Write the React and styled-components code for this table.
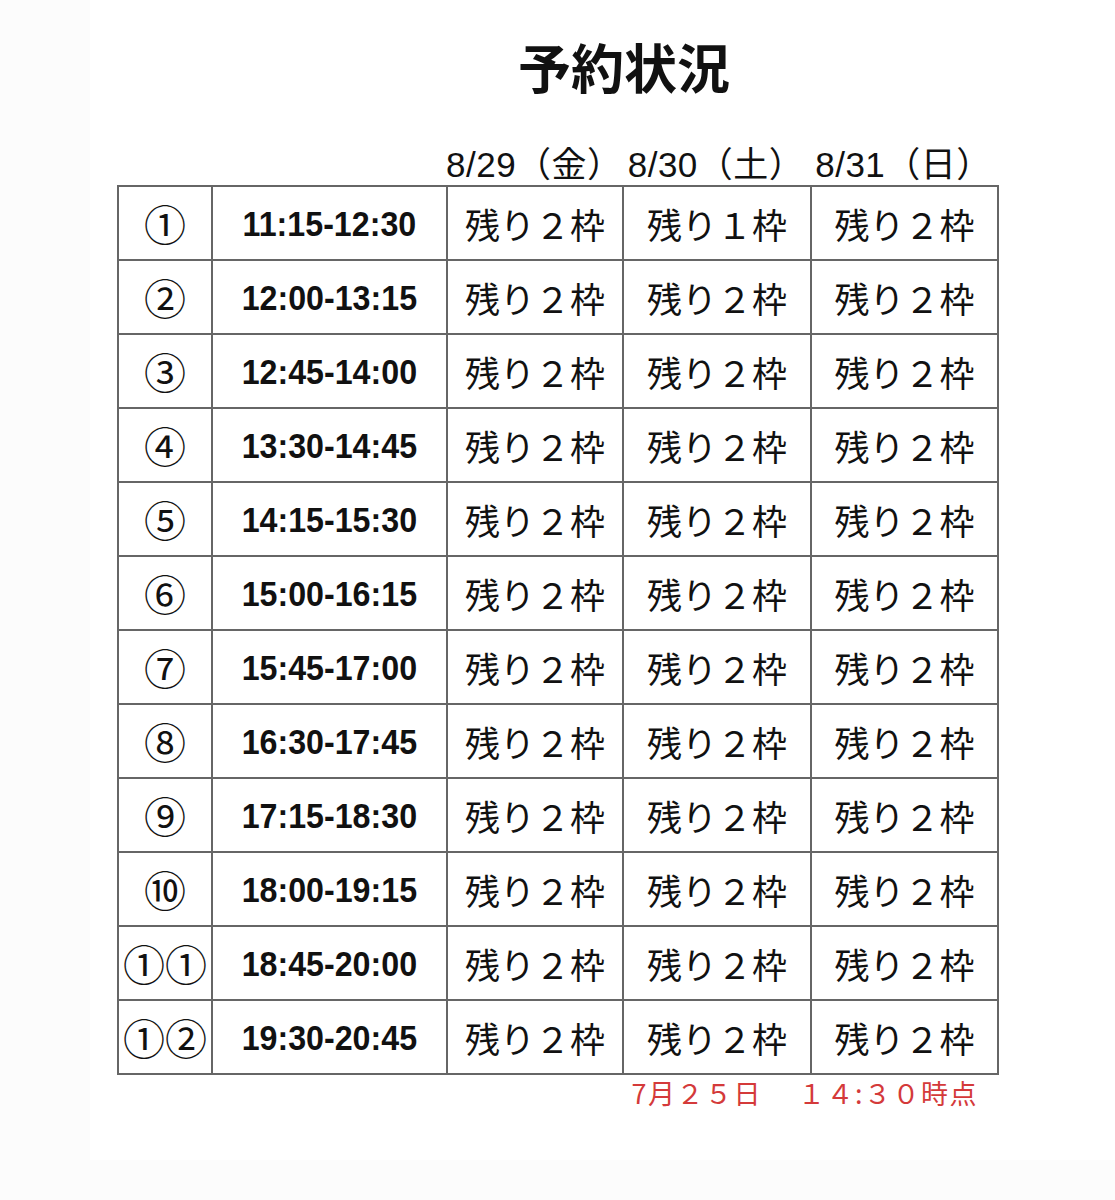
import styled, { createGlobalStyle } from "styled-components";

const GlobalStyle = createGlobalStyle`
  body {
    margin: 0;
    background: #fcfcfc;
  }
`;

const CJK = `"Noto Sans CJK JP", sans-serif`;
const LATIN_CJK = `"Liberation Sans", "Noto Sans CJK JP", sans-serif`;

const COLS = [94, 235, 176, 188, 187];

const dates = ["8/29（金）", "8/30（土）", "8/31（日）"];

const slots = [
  ["①", "11:15-12:30", [2, 1, 2]],
  ["②", "12:00-13:15", [2, 2, 2]],
  ["③", "12:45-14:00", [2, 2, 2]],
  ["④", "13:30-14:45", [2, 2, 2]],
  ["⑤", "14:15-15:30", [2, 2, 2]],
  ["⑥", "15:00-16:15", [2, 2, 2]],
  ["⑦", "15:45-17:00", [2, 2, 2]],
  ["⑧", "16:30-17:45", [2, 2, 2]],
  ["⑨", "17:15-18:30", [2, 2, 2]],
  ["⑩", "18:00-19:15", [2, 2, 2]],
  ["①①", "18:45-20:00", [2, 2, 2]],
  ["①②", "19:30-20:45", [2, 2, 2]],
];

const fullWidth = (n) => String.fromCharCode(0xff10 + n);

function App() {
  return (
    <>
      <GlobalStyle />
      <Sheet>
        <Title>予約状況</Title>
        <HeaderRow>
          {dates.map((d, i) => (
            <DateLabel key={d} col={i + 3}>
              {d}
            </DateLabel>
          ))}
        </HeaderRow>
        <Table>
          <colgroup>
            {COLS.map((w, i) => (
              <col key={i} style={{ width: w }} />
            ))}
          </colgroup>
          <tbody>
            {slots.map(([no, time, left]) => (
              <Row key={time}>
                <NoCell>{no}</NoCell>
                <TimeCell>
                  <TimeText>{time}</TimeText>
                </TimeCell>
                {left.map((n, i) => (
                  <SlotCell key={i}>残り{fullWidth(n)}枠</SlotCell>
                ))}
              </Row>
            ))}
          </tbody>
        </Table>
        <Note>7月２５日　 １４:３０時点</Note>
      </Sheet>
    </>
  );
}

const Sheet = styled.div`
  margin-left: 90px;
  min-height: 1160px;
  background: #fff;
  padding-left: 27px;
  display: flex;
  flex-direction: column;
  box-sizing: border-box;
`;

const Title = styled.h1`
  margin: 40px 0 0;
  width: 880px;
  padding-left: 134px;
  box-sizing: border-box;
  text-align: center;
  font-family: ${CJK};
  font-weight: 700;
  font-size: 53px;
  line-height: 1;
  color: #111;
`;

const HeaderRow = styled.div`
  display: grid;
  grid-template-columns: ${COLS.map((w) => `${w}px`).join(" ")};
  height: 38px;
  margin-top: 54px;
  align-items: start;
`;

const DateLabel = styled.div`
  grid-column: ${({ col }) => col};
  text-align: center;
  white-space: nowrap;
  font-family: ${LATIN_CJK};
  font-size: 35px;
  line-height: 35px;
  letter-spacing: 0.5px;
  color: #111;
`;

const Table = styled.table`
  width: 880px;
  table-layout: fixed;
  border-collapse: collapse;
  color: #111;

  td {
    border: 2px solid #666;
    padding: 0;
    text-align: center;
    vertical-align: middle;
    white-space: nowrap;
  }
`;

const Row = styled.tr`
  height: 74px;
`;

const NoCell = styled.td`
  font-family: ${CJK};
  font-size: 42px;
  line-height: 1;
  font-weight: 400;
`;

const TimeCell = styled.td`
  font-family: "Liberation Sans", Arial, sans-serif;
`;

const TimeText = styled.span`
  display: inline-block;
  font-size: 35px;
  font-weight: 700;
  line-height: 1;
  transform: scaleX(0.92);
`;

const SlotCell = styled.td`
  font-family: ${CJK};
  font-size: 35px;
  line-height: 1;
`;

const Note = styled.div`
  width: 880px;
  margin-top: 4px;
  padding-right: 19px;
  box-sizing: border-box;
  text-align: right;
  font-family: ${CJK};
  font-size: 27px;
  line-height: 1;
  letter-spacing: 1.5px;
  color: #d43a3a;
`;

export default App;
